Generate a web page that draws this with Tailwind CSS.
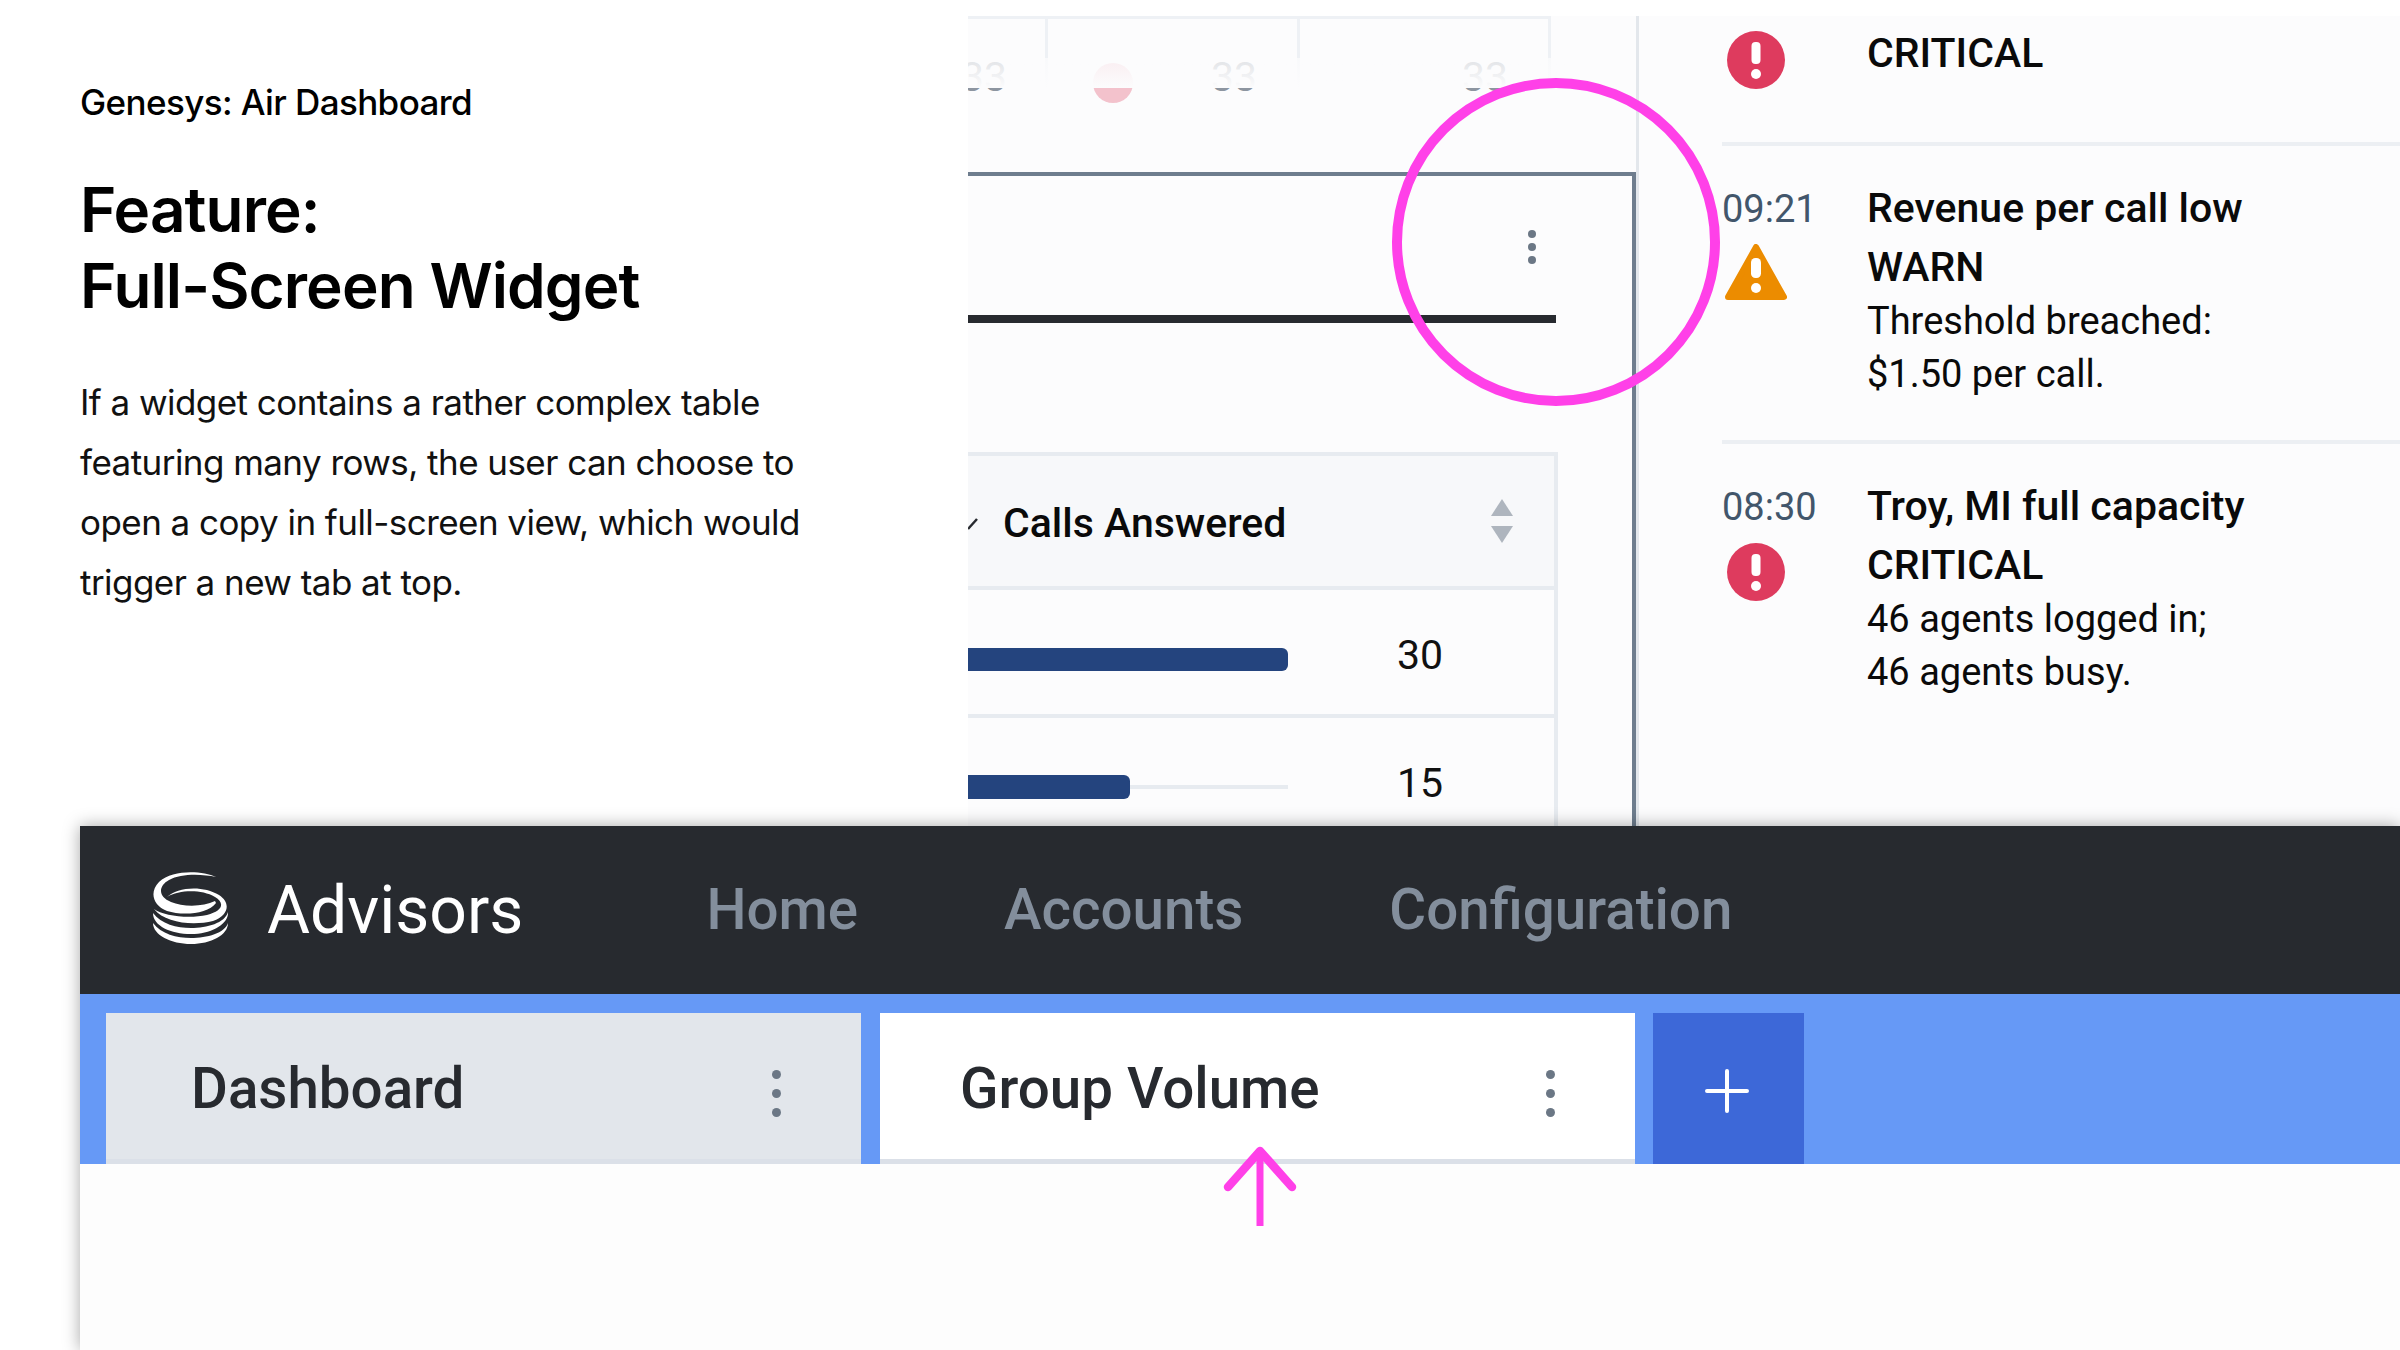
<!DOCTYPE html>
<html lang="en">
<head>
  <meta charset="UTF-8">
  <title>Feature: Full-Screen Widget</title>
  <script src="https://cdn.jsdelivr.net/npm/@tailwindcss/browser@4"></script>
</head>
<body class="bg-white">
<div class="relative w-[2400px] h-[1350px] overflow-hidden bg-white font-['Roboto',sans-serif]">

  <!-- top part: text and cropped product shots -->
  <div class="flex h-[826px]">
    <!-- Left copy -->
    <div class="w-[968px] shrink-0 pl-[80px] pt-[82px] text-black font-['Inter',sans-serif]">
      <p class="text-[35px] leading-[40px] font-medium tracking-[-0.6px]">Genesys: Air Dashboard</p>
      <h1 class="mt-[50px] text-[62px] leading-[76px] font-semibold tracking-[-0.9px]">Feature:<br>Full-Screen Widget</h1>
      <p class="mt-[48px] text-[35px] leading-[60px] tracking-[-0.55px] text-[#111]">If a widget contains a rather complex table<br>featuring many rows, the user can choose to<br>open a copy in full-screen view, which would<br>trigger a new tab at top.</p>
    </div>

    <!-- Middle widget -->
    <div class="w-[671px] shrink-0 mt-[16px] flex flex-col bg-[#fcfcfd] border-r-[3px] border-[#e3e7ec] overflow-hidden">
      <!-- faded table above the widget -->
      <div class="relative h-[156px] shrink-0">
        <div class="flex h-[72px] w-[583px] border-t-[3px] border-[#eef1f5] text-[41px] leading-[48px] text-[#8d95a0]">
          <div class="w-[80px] flex justify-end pr-[38px] pt-[34px] border-r-[3px] border-[#eef1f5]">33</div>
          <div class="w-[252px] flex justify-between pl-[45px] pr-[40px] pt-[34px] border-r-[3px] border-[#eef1f5]">
            <span class="w-[40px] h-[40px] mt-[10px] rounded-full bg-[#de3b5e]/30"></span>
            <span>33</span>
          </div>
          <div class="w-[251px] flex justify-end pr-[40px] pt-[34px] border-r-[3px] border-[#eef1f5]">33</div>
        </div>
        <div class="absolute left-0 top-[42px] w-[600px] h-[30px] bg-linear-to-b from-[#fcfcfd]/75 to-[#fcfcfd]"></div>
      </div>

      <!-- widget frame -->
      <div class="flex-1 min-h-0 border-t-4 border-r-4 border-[#6e7d8e] overflow-hidden">
        <div class="flex justify-end pt-[54px] pr-[96px]">
          <div class="flex flex-col gap-[5px]">
            <span class="w-[8px] h-[8px] rounded-full bg-[#6b7785]"></span>
            <span class="w-[8px] h-[8px] rounded-full bg-[#6b7785]"></span>
            <span class="w-[8px] h-[8px] rounded-full bg-[#6b7785]"></span>
          </div>
        </div>
        <div class="mt-[51px] w-[588px] h-[8px] bg-[#272a2f]"></div>

        <!-- Calls Answered table -->
        <div class="mt-[129px] w-[590px] border-t-4 border-r-4 border-[#e7ebf0]">
          <div class="h-[134px] flex items-center justify-between pr-[41px] bg-[#f7f8fa] border-b-4 border-[#e7ebf0]">
            <div class="flex items-center pt-[5px]">
              <svg width="10" height="12" viewBox="0 0 10 12" fill="none" stroke="#272a2f" stroke-width="2.5">
                <path d="M0 11 L9 1"/>
              </svg>
              <span class="ml-[25px] text-[41px] font-medium text-[#0a0a0a]">Calls Answered</span>
            </div>
            <svg width="22" height="44" viewBox="0 0 22 44" fill="#aeb5be">
              <path d="M11 0 L22 17 H0 Z"/>
              <path d="M0 27 H22 L11 44 Z"/>
            </svg>
          </div>
          <div class="h-[128px] flex items-center pt-[14px] pr-[110px] border-b-4 border-[#e7ebf0]">
            <div class="w-[320px] h-[23px] rounded-r-[6px] bg-[#24447e]"></div>
            <span class="ml-[109px] -mt-[6px] text-[41px] text-[#111]">30</span>
          </div>
          <div class="h-[110px] flex items-center pt-[28px] pr-[110px]">
            <div class="w-[320px] h-[4px] bg-[#e7ebf0]">
              <div class="w-[162px] h-[24px] -mt-[10px] rounded-r-[6px] bg-[#24447e]"></div>
            </div>
            <span class="ml-[109px] -mt-[6px] text-[41px] text-[#111]">15</span>
          </div>
        </div>
      </div>
    </div>

    <!-- Right alerts list -->
    <div class="flex-1 mt-[16px] pl-[83px] bg-[#fcfcfd] overflow-hidden">
      <div class="h-[130px] border-b-4 border-[#eceff3] flex">
        <div class="w-[145px] pl-[5px] pt-[15px]">
          <svg width="58" height="58" viewBox="0 0 58 58">
            <circle cx="29" cy="29" r="29" fill="#de3b5e"/>
            <rect x="24.5" y="11" width="9" height="22" rx="4" fill="#fff"/>
            <circle cx="29" cy="43" r="5" fill="#fff"/>
          </svg>
        </div>
        <div class="text-[41px] leading-[53px] font-medium text-[#0a0a0a] pt-[11px]">CRITICAL</div>
      </div>

      <div class="h-[298px] border-b-4 border-[#eceff3] flex pt-[41px]">
        <div class="w-[145px]">
          <div class="text-[38px] leading-[44px] text-[#42566b]">09:21</div>
          <svg class="mt-[13px] ml-[3px]" width="62" height="57" viewBox="0 0 62 57">
            <path d="M31 3 L59 53 H3 Z" fill="#ec8c00" stroke="#ec8c00" stroke-width="6" stroke-linejoin="round"/>
            <rect x="26" y="14" width="10" height="20" rx="4.5" fill="#fff"/>
            <circle cx="31" cy="44" r="5" fill="#fff"/>
          </svg>
        </div>
        <div class="text-[#0a0a0a]">
          <div class="text-[41px] leading-[59px] font-medium -mt-[8px]">Revenue per call low</div>
          <div class="text-[41px] leading-[59px] font-medium">WARN</div>
          <div class="text-[38px] leading-[53px] -mt-[2px]">Threshold breached:<br>$1.50 per call.</div>
        </div>
      </div>

      <div class="flex pt-[41px]">
        <div class="w-[145px]">
          <div class="text-[38px] leading-[44px] text-[#42566b]">08:30</div>
          <svg class="mt-[14px] ml-[5px]" width="58" height="58" viewBox="0 0 58 58">
            <circle cx="29" cy="29" r="29" fill="#de3b5e"/>
            <rect x="24.5" y="11" width="9" height="22" rx="4" fill="#fff"/>
            <circle cx="29" cy="43" r="5" fill="#fff"/>
          </svg>
        </div>
        <div class="text-[#0a0a0a]">
          <div class="text-[41px] leading-[59px] font-medium -mt-[8px]">Troy, MI full capacity</div>
          <div class="text-[41px] leading-[59px] font-medium">CRITICAL</div>
          <div class="text-[38px] leading-[53px] -mt-[2px]">46 agents logged in;<br>46 agents busy.</div>
        </div>
      </div>
    </div>
  </div>

  <!-- Bottom panel with the app header -->
  <div class="relative ml-[80px] h-[524px] bg-[#fdfdfd] shadow-[0_0_16px_rgba(0,0,0,0.35)]">
    <div class="h-[168px] bg-[#272a2f] flex items-center pl-[73px]">
      <svg class="mt-[-4px]" width="75" height="72" viewBox="0 0 75 72" fill="#fff">
        <path d="M63 5 C50 -1 20 -3 6 10 C-4 20 0 34 14 39 C30 44 55 42 63 31 L62 29 C50 35 30 35 18 30 C5 25 5 14 16 8 C28 1 50 2 63 5 Z"/>
        <path d="M14 25 C24 15 50 13 66 23 C78 31 76 43 60 49 C40 54 12 51 1 37 C10 44 36 47 54 43 C70 39 72 31 62 25 C48 17 26 18 14 25 Z"/>
        <path d="M0 41 C8 52 24 56 38 56 C54 56 72 51 75 40 C76 52 58 62 38 62 C18 62 0 54 0 41 Z"/>
        <path d="M0 51 C8 62 24 66 38 66 C54 66 72 61 75 51 C75 63 58 72 38 72 C18 72 0 63 0 51 Z"/>
      </svg>
      <span class="ml-[39px] text-[66px] font-normal text-white">Advisors</span>
      <nav class="flex ml-[183px] gap-[146px] text-[56.5px] font-medium text-[#838e9c]">
        <a>Home</a>
        <a>Accounts</a>
        <a>Configuration</a>
      </nav>
    </div>
    <div class="h-[170px] bg-[#6699f6] flex pt-[19px] pl-[26px]">
      <div class="w-[755px] flex items-center justify-between pl-[85px] pr-[80px] bg-[#e2e6eb] border-b-[5px] border-[#dbe0e8]">
        <span class="pt-[7px] text-[56.5px] font-medium text-[#272a2f]">Dashboard</span>
        <div class="flex flex-col gap-[10px] mt-[15px]">
          <span class="w-[9px] h-[9px] rounded-full bg-[#6b7785]"></span>
          <span class="w-[9px] h-[9px] rounded-full bg-[#6b7785]"></span>
          <span class="w-[9px] h-[9px] rounded-full bg-[#6b7785]"></span>
        </div>
      </div>
      <div class="ml-[19px] w-[755px] flex items-center justify-between pl-[80px] pr-[80px] bg-white border-b-[5px] border-[#dbe0e8]">
        <span class="pt-[7px] text-[56.5px] font-medium text-[#272a2f]">Group Volume</span>
        <div class="flex flex-col gap-[10px] mt-[15px]">
          <span class="w-[9px] h-[9px] rounded-full bg-[#6b7785]"></span>
          <span class="w-[9px] h-[9px] rounded-full bg-[#6b7785]"></span>
          <span class="w-[9px] h-[9px] rounded-full bg-[#6b7785]"></span>
        </div>
      </div>
      <div class="ml-[18px] w-[151px] flex items-center justify-center bg-[#3d68d8]">
        <svg class="mt-[5px] -ml-[3px]" width="44" height="44" viewBox="0 0 44 44" stroke="#fff" stroke-width="4" stroke-linecap="round">
          <path d="M22 2 V42 M2 22 H42"/>
        </svg>
      </div>
    </div>
  </div>

  <!-- Pink annotations -->
  <svg class="absolute left-[1392px] top-[78px]" width="328" height="328" viewBox="0 0 328 328" fill="none">
    <circle cx="164" cy="164" r="159" stroke="#ff40e8" stroke-width="10"/>
  </svg>
  <svg class="absolute left-[1220px] top-[1142px]" width="80" height="90" viewBox="0 0 80 90" fill="none" stroke="#ff40e8" stroke-linecap="round">
    <path d="M40 8 V84" stroke-width="7" stroke-linecap="butt"/>
    <path d="M8 45 L40 9 L72 45" stroke-width="8.5" stroke-linejoin="round"/>
  </svg>
</div>
</body>
</html>
